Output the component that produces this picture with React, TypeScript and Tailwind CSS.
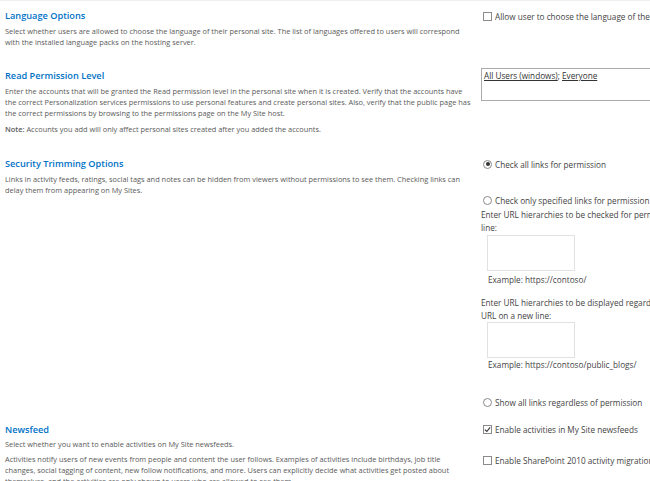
import React from 'react';

const font = { fontFamily: '"Open Sans", "Noto Sans", sans-serif' };

const Heading: React.FC<{ children: React.ReactNode }> = ({ children }) => (
  <h2 className="text-[9.2px] leading-[12px] font-semibold text-[#0072c6] whitespace-nowrap">{children}</h2>
);

const Lines: React.FC<{ lines: React.ReactNode[]; className?: string }> = ({ lines, className = '' }) => (
  <div className={`text-[7.4px] leading-[11px] text-[#5a5a5a] ${className}`}>
    {lines.map((l, i) => (
      <div key={i} className="whitespace-nowrap">{l}</div>
    ))}
  </div>
);

const Check: React.FC<{ checked?: boolean }> = ({ checked }) => (
  <span className="w-[9px] h-[9px] border border-[#8a8a8a] bg-white flex items-center justify-center shrink-0">
    {checked && (
      <svg width="7" height="7" viewBox="0 0 8 8">
        <path d="M1 4.2 L3.2 6.3 L7 1.5" stroke="#333" strokeWidth="1.3" fill="none" />
      </svg>
    )}
  </span>
);

const Radio: React.FC<{ checked?: boolean }> = ({ checked }) => (
  <span className="w-[9px] h-[9px] rounded-full border border-[#8a8a8a] bg-white flex items-center justify-center shrink-0">
    {checked && <span className="w-[4px] h-[4px] rounded-full bg-[#333]" />}
  </span>
);

const Option: React.FC<{ control: React.ReactNode; label: string; className?: string }> = ({ control, label, className = '' }) => (
  <div className={`flex items-center gap-[3px] pl-[2px] text-[8.2px] leading-[13px] text-[#444] whitespace-nowrap ${className}`}>
    {control}
    <span>{label}</span>
  </div>
);

const App: React.FC = () => {
  return (
    <div className="w-[650px] h-[481px] overflow-hidden bg-white border-t border-[#f0f0f0]" style={font}>
      <div className="grid grid-cols-[481px_1fr] pt-[9px]">
        {/* Language Options */}
        <div className="pl-[5px]">
          <Heading>Language Options</Heading>
          <Lines
            className="mt-[4px]"
            lines={[
              'Select whether users are allowed to choose the language of their personal site.  The list of languages offered to users will correspond',
              'with the installed language packs on the hosting server.',
            ]}
          />
        </div>
        <div>
          <Option control={<Check />} label="Allow user to choose the language of their personal site" className="-mt-[0.5px]" />
        </div>

        {/* Read Permission Level */}
        <div className="pl-[5px] mt-[22px]">
          <Heading>Read Permission Level</Heading>
          <Lines
            className="mt-[4px]"
            lines={[
              'Enter the accounts that will be granted the Read permission level in the personal site when it is created. Verify that the accounts have',
              'the correct Personalization services permissions to use personal features and create personal sites. Also, verify that the public page has',
              'the correct permissions by browsing to the permissions page on the My Site host.',
            ]}
          />
          <Lines
            className="mt-[5px]"
            lines={[
              <>
                <span className="font-semibold">Note:</span> Accounts you add will only affect personal sites created after you added the accounts.
              </>,
            ]}
          />
        </div>
        <div className="mt-[20px]">
          <div className="w-[200px] h-[33px] border border-[#ababab] px-[2px] py-[1px] text-[8.2px] leading-[12px] text-[#333] whitespace-nowrap">
            <span className="underline">All Users (windows)</span>; <span className="underline">Everyone</span>
          </div>
        </div>

        {/* Security Trimming Options */}
        <div className="pl-[5px] mt-[23px]">
          <Heading>Security Trimming Options</Heading>
          <Lines
            className="mt-[4px]"
            lines={[
              'Links in activity feeds, ratings, social tags and notes can be hidden from viewers without permissions to see them. Checking links can',
              'delay them from appearing on My Sites.',
            ]}
          />
        </div>
        <div className="mt-[23px] text-[8.2px] leading-[13px] text-[#444] whitespace-nowrap">
          <Option control={<Radio checked />} label="Check all links for permission" className="-mt-[0.5px]" />
          <Option control={<Radio />} label="Check only specified links for permission" className="mt-[23px]" />
          <div className="mt-[1px]">
            <div>Enter URL hierarchies to be checked for permission, one URL on a new</div>
            <div>line:</div>
          </div>
          <div className="ml-[6px] mt-[1px] w-[88px] h-[36px] border border-[#e1e1e1]" />
          <div className="ml-[7px] mt-[2px]">Example: https://contoso/</div>
          <div className="mt-[10px]">
            <div>Enter URL hierarchies to be displayed regardless of permission, one</div>
            <div>URL on a new line:</div>
          </div>
          <div className="ml-[6px] w-[88px] h-[36px] border border-[#e1e1e1]" />
          <div className="ml-[7px]">Example: https://contoso/public_blogs/</div>
          <Option control={<Radio />} label="Show all links regardless of permission" className="mt-[25px]" />
        </div>

        {/* Newsfeed */}
        <div className="pl-[5px] mt-[15px]">
          <Heading>Newsfeed</Heading>
          <Lines className="mt-[3px]" lines={['Select whether you want to enable activities on My Site newsfeeds.']} />
          <Lines
            className="mt-[4px]"
            lines={[
              'Activities notify users of new events from people and content the user follows. Examples of activities include birthdays, job title',
              'changes, social tagging of content, new follow notifications, and more. Users can explicitly decide what activities get posted about',
              'themselves, and the activities are only shown to users who are allowed to see them.',
            ]}
          />
        </div>
        <div className="mt-[15px]">
          <Option control={<Check checked />} label="Enable activities in My Site newsfeeds" className="-mt-[0.5px]" />
          <Option control={<Check />} label="Enable SharePoint 2010 activity migration" className="mt-[18px]" />
        </div>
      </div>
    </div>
  );
};

export default App;
